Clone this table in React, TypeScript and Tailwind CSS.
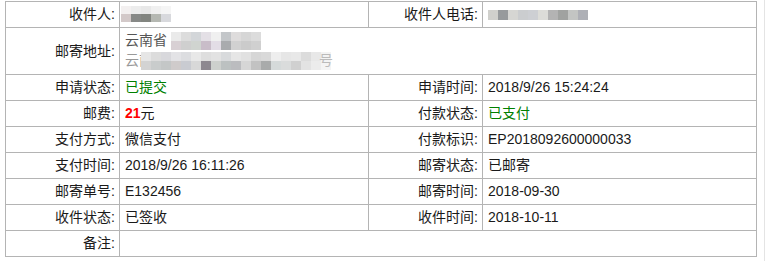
import React from "react";

const B = "border-[#b4b4b4]";

function Label({ children }: { children: React.ReactNode }) {
  return (
    <div className={`flex items-center justify-end border-r border-b ${B} pr-[4px] text-[#1a1a1a]`}>
      {children}
    </div>
  );
}

function Value({ children, span = false, className = "" }: { children?: React.ReactNode; span?: boolean; className?: string }) {
  return (
    <div className={`flex items-center border-r border-b ${B} pl-[5px] text-[#1a1a1a] ${span ? "col-span-3" : ""} ${className}`}>
      {children}
    </div>
  );
}

function Mosaic({ rows, w = 10, h = 10 }: { rows: string[][]; w?: number; h?: number }) {
  return (
    <div className="flex flex-col blur-[0.6px]">
      {rows.map((r, i) => (
        <div key={i} className="flex">
          {r.map((c, j) => (
            <div key={j} style={{ width: w, height: h, background: c }} />
          ))}
        </div>
      ))}
    </div>
  );
}

export default function App() {
  return (
    <div
      className="relative w-[767px] h-[261px] bg-white pt-[1px] pl-[5px] text-[14px]"
      style={{ fontFamily: '"Liberation Sans", "Noto Sans CJK SC", sans-serif' }}
    >
      <div className={`grid w-[752px] grid-cols-[114px_249px_114px_274px] grid-rows-[26px_47px_repeat(7,26px)] border-l border-t ${B}`}>
        <Label>收件人:</Label>
        <Value>
          <div className="-ml-[4px] -mt-[2px]">
            <Mosaic
              h={8}
              rows={[
                ["#f3f0f0", "#ececec", "#e8e8e8", "#f0f0f0", "#f5f5f5"],
                ["#d3c9c9", "#878987", "#828580", "#b5b8b2", "#d8d9dd"],
              ]}
            />
          </div>
        </Value>
        <Label>收件人电话:</Label>
        <Value>
          <div className="mt-[1px]">
            <Mosaic
              rows={[["#d0d0cc", "#979a9c", "#d6d6d3", "#cbcdcf", "#cdcfd3", "#dcdcd8", "#b3b3b3", "#a0a2a0", "#c3c5c3", "#aeb0b6"]]}
            />
          </div>
        </Value>

        <Label>邮寄地址:</Label>
        <Value span>
          <div className="flex flex-col -mt-[1px]">
            <div className="flex items-center h-[20px]">
              <span className="text-[#555]">云南省</span>
              <div className="ml-[4px]">
                <Mosaic
                  h={9}
                  rows={[
                    ["#eaeaea", "#dcdcdc", "#d3d6d9", "#e4e0e6", "#f0f0f0", "#c3c6c9", "#dedcdc", "#d6d6d6", "#dcdcdc"],
                    ["#d8d0d4", "#cfcfcf", "#d0d4d0", "#c9bdc9", "#e3dde6", "#a9abae", "#d1d1d1", "#cbcbcb", "#d0d0d0"],
                  ]}
                />
              </div>
            </div>
            <div className="flex items-center h-[20px] relative">
              <span className="text-[#999]">云南</span>
              <div className="absolute left-[16px] top-[1px]">
                <Mosaic
                  h={9}
                  rows={[
                    ["#e6e6e6", "#dcdcdc", "#d8d8dc", "#e3e3e6", "#dcdde0", "#e8e8e8", "#dedede", "#e2e2e2", "#d8dadc", "#e6e6e6", "#e1e1e1", "#d6d6d6", "#d9d9d9", "#eeeeee", "#e6e6e6", "#e8e8e8", "#dcdcdc", "#e8e8e8", "#f3f3f3"],
                    ["#d3d3d3", "#c9cccc", "#c4c7c7", "#cfcbcb", "#c9cbd1", "#d8d8d8", "#8d8890", "#cdd0cd", "#bcc1c1", "#bbbcbf", "#d6d6d6", "#c2c2c2", "#a9abab", "#d5dada", "#dadcdc", "#d0d0d0", "#e3e3e3", "#ececec", "#f4f4f4"],
                  ]}
                />
              </div>
              <span className="absolute left-[194px] text-[#bbb]">号</span>
            </div>
          </div>
        </Value>

        <Label>申请状态:</Label>
        <Value className="!text-[#008000]">已提交</Value>
        <Label>申请时间:</Label>
        <Value>2018/9/26 15:24:24</Value>

        <Label>邮费:</Label>
        <Value>
          <span className="font-bold text-[#ff0000]">21</span>元
        </Value>
        <Label>付款状态:</Label>
        <Value className="!text-[#008000]">已支付</Value>

        <Label>支付方式:</Label>
        <Value>微信支付</Value>
        <Label>付款标识:</Label>
        <Value>EP2018092600000033</Value>

        <Label>支付时间:</Label>
        <Value>2018/9/26 16:11:26</Value>
        <Label>邮寄状态:</Label>
        <Value>已邮寄</Value>

        <Label>邮寄单号:</Label>
        <Value>E132456</Value>
        <Label>邮寄时间:</Label>
        <Value>2018-09-30</Value>

        <Label>收件状态:</Label>
        <Value>已签收</Value>
        <Label>收件时间:</Label>
        <Value>2018-10-11</Value>

        <Label>备注:</Label>
        <Value span />
      </div>
      <div className="absolute right-[2px] top-0 h-[261px] w-px bg-[#e4e4e4]" />
    </div>
  );
}
